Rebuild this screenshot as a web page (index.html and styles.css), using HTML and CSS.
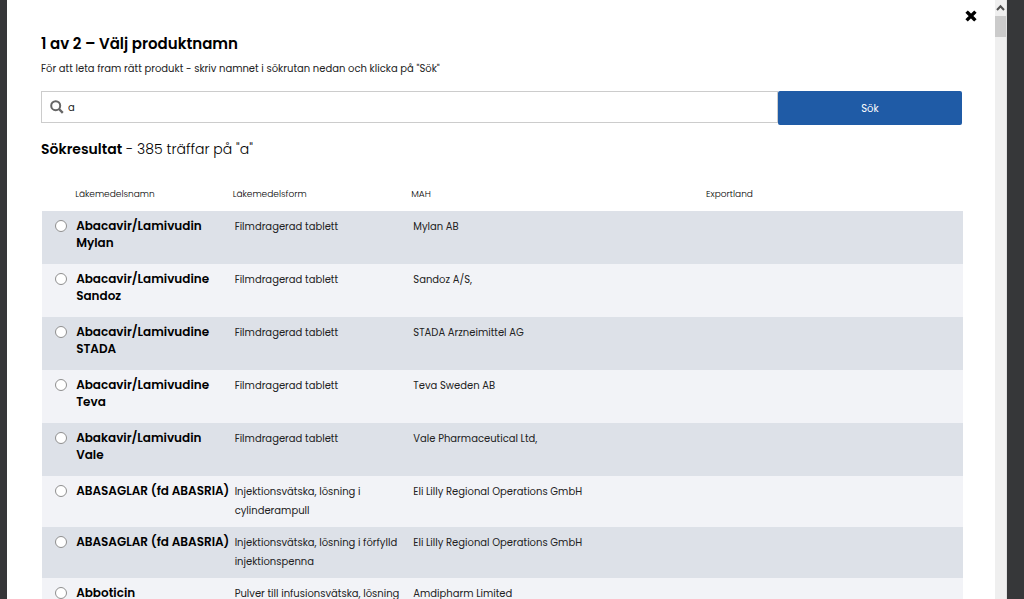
FILE: index.html
```html
<!DOCTYPE html>
<html lang="sv">
<head>
<meta charset="utf-8">
<title>Välj produktnamn</title>
<link rel="stylesheet" href="styles.css">
</head>
<body>
<div class="dialog" role="dialog" aria-labelledby="title">
  <main class="content">
    <button class="close" type="button" aria-label="Stäng">
      <svg width="12" height="12" viewBox="0 0 12 12"><path d="M2.8 2.8 9.2 9.2M9.2 2.8 2.8 9.2" stroke="#000" stroke-width="3.4" stroke-linecap="square"/></svg>
    </button>
    <h1 class="title" id="title">1 av 2 – Välj produktnamn</h1>
    <p class="intro">För att leta fram rätt produkt - skriv namnet i sökrutan nedan och klicka på "Sök"</p>
    <form class="search">
      <label class="field">
        <svg width="14" height="14" viewBox="0 0 14 14" fill="none" stroke="#666" stroke-width="2"><circle cx="5.7" cy="5.7" r="4.5"/><path d="M9 9l3.8 3.8" stroke-width="2.4"/></svg>
        <input class="query" type="text" value="a" aria-label="Produktnamn">
      </label>
      <button class="submit" type="button">Sök</button>
    </form>
    <h2 class="result"><strong>Sökresultat</strong> - 385 träffar på "a"</h2>
    <table class="products">
      <colgroup><col class="col-pick"><col class="col-name"><col class="col-form"><col class="col-mah"><col></colgroup>
      <thead>
        <tr><td></td><th scope="col">Läkemedelsnamn</th><th scope="col">Läkemedelsform</th><th scope="col">MAH</th><th scope="col">Exportland</th></tr>
      </thead>
      <tbody>
        <tr><td><input class="pick" type="radio" name="product" id="p1"></td><td class="name"><label for="p1">Abacavir/Lamivudin Mylan</label></td><td>Filmdragerad tablett</td><td>Mylan AB</td><td></td></tr>
        <tr><td><input class="pick" type="radio" name="product" id="p2"></td><td class="name"><label for="p2">Abacavir/Lamivudine Sandoz</label></td><td>Filmdragerad tablett</td><td>Sandoz A/S,</td><td></td></tr>
        <tr><td><input class="pick" type="radio" name="product" id="p3"></td><td class="name"><label for="p3">Abacavir/Lamivudine STADA</label></td><td>Filmdragerad tablett</td><td>STADA Arzneimittel AG</td><td></td></tr>
        <tr><td><input class="pick" type="radio" name="product" id="p4"></td><td class="name"><label for="p4">Abacavir/Lamivudine Teva</label></td><td>Filmdragerad tablett</td><td>Teva Sweden AB</td><td></td></tr>
        <tr><td><input class="pick" type="radio" name="product" id="p5"></td><td class="name"><label for="p5">Abakavir/Lamivudin Vale</label></td><td>Filmdragerad tablett</td><td>Vale Pharmaceutical Ltd,</td><td></td></tr>
        <tr><td><input class="pick" type="radio" name="product" id="p6"></td><td class="name"><label for="p6">ABASAGLAR (fd ABASRIA)</label></td><td>Injektionsvätska, lösning i cylinderampull</td><td>Eli Lilly Regional Operations GmbH</td><td></td></tr>
        <tr><td><input class="pick" type="radio" name="product" id="p7"></td><td class="name"><label for="p7">ABASAGLAR (fd ABASRIA)</label></td><td>Injektionsvätska, lösning i förfylld injektionspenna</td><td>Eli Lilly Regional Operations GmbH</td><td></td></tr>
        <tr><td><input class="pick" type="radio" name="product" id="p8"></td><td class="name"><label for="p8">Abboticin</label></td><td>Pulver till infusionsvätska, lösning</td><td>Amdipharm Limited</td><td></td></tr>
      </tbody>
    </table>
  </main>
  <div class="scrollbar" aria-hidden="true">
    <svg width="11" height="16" viewBox="0 0 11 16" fill="none" stroke="#505050" stroke-width="2"><path d="M2 10l3.5-3.8L9 10"/></svg>
    <div class="thumb"></div>
  </div>
</div>
</body>
</html>
```
FILE: styles.css
```css
* { box-sizing: border-box; }
body {
  margin: 0;
  background: #363739;
  color: #222;
  font: 10px/19px Poppins, Inter, sans-serif;
}
button, input { font: inherit; color: inherit; }
.dialog {
  display: flex;
  height: 100vh;
  margin: 0 17px 0 7px;
  overflow: hidden;
  background: #fff;
}
.content { position: relative; flex: 1; padding: 34px 33px 0 34px; }
.close {
  position: absolute;
  top: 10px;
  right: 18px;
  display: flex;
  padding: 0;
  border: 0;
  background: none;
}
.title { margin: 0; color: #000; font-size: 15px; line-height: 20px; font-weight: 600; }
.intro { margin: 5px 0 13px; }
.search { display: flex; align-items: flex-start; margin: 0; }
.field {
  display: flex;
  flex: 1;
  align-items: center;
  gap: 4px;
  height: 32px;
  padding-left: 8px;
  border: 1px solid #ccc;
}
.query { flex: 1; min-width: 0; padding: 0; border: 0; outline: 0; background: none; }
.submit {
  width: 20%;
  height: 34px;
  padding: 0;
  border: 0;
  border-radius: 2px;
  background: #1f5ba6;
  color: #fff;
}
.result { margin: 14px 0 26px; color: #000; font-size: 14px; line-height: 20px; font-weight: 300; }
.result strong { font-weight: 600; }
.products { width: 100%; margin-left: 1px; border-collapse: collapse; table-layout: fixed; }
.col-pick { width: 3.6%; }
.col-name { width: 17.1%; }
.col-form { width: 19.4%; }
.col-mah { width: 32%; }
.products th { padding: 0 0 7px; color: #000; font-size: 9px; font-weight: 300; text-align: left; }
.products tbody tr { background: #f2f3f7; }
.products tbody tr:nth-child(odd) { background: #dde1e8; }
.products td { padding: 6px 0 7px 2px; vertical-align: top; }
.products thead td { padding: 0; }
.products .name { padding: 6px 3px 13px 1px; color: #000; font-size: 12px; line-height: 17px; font-weight: 600; }
.name label { display: block; }
.pick {
  display: block;
  appearance: none;
  width: 12px;
  height: 12px;
  margin: 3px 0 0 11px;
  border: 1px solid #8f8f8f;
  border-radius: 50%;
  background: #fff;
}
.pick:checked { border: 4px solid #1f5ba6; }
.scrollbar { width: 12px; border-right: 1px solid #e0e0e0; background: #efefef; }
.scrollbar svg { display: block; }
.thumb { height: 21px; background: #cbcbcb; }
```
